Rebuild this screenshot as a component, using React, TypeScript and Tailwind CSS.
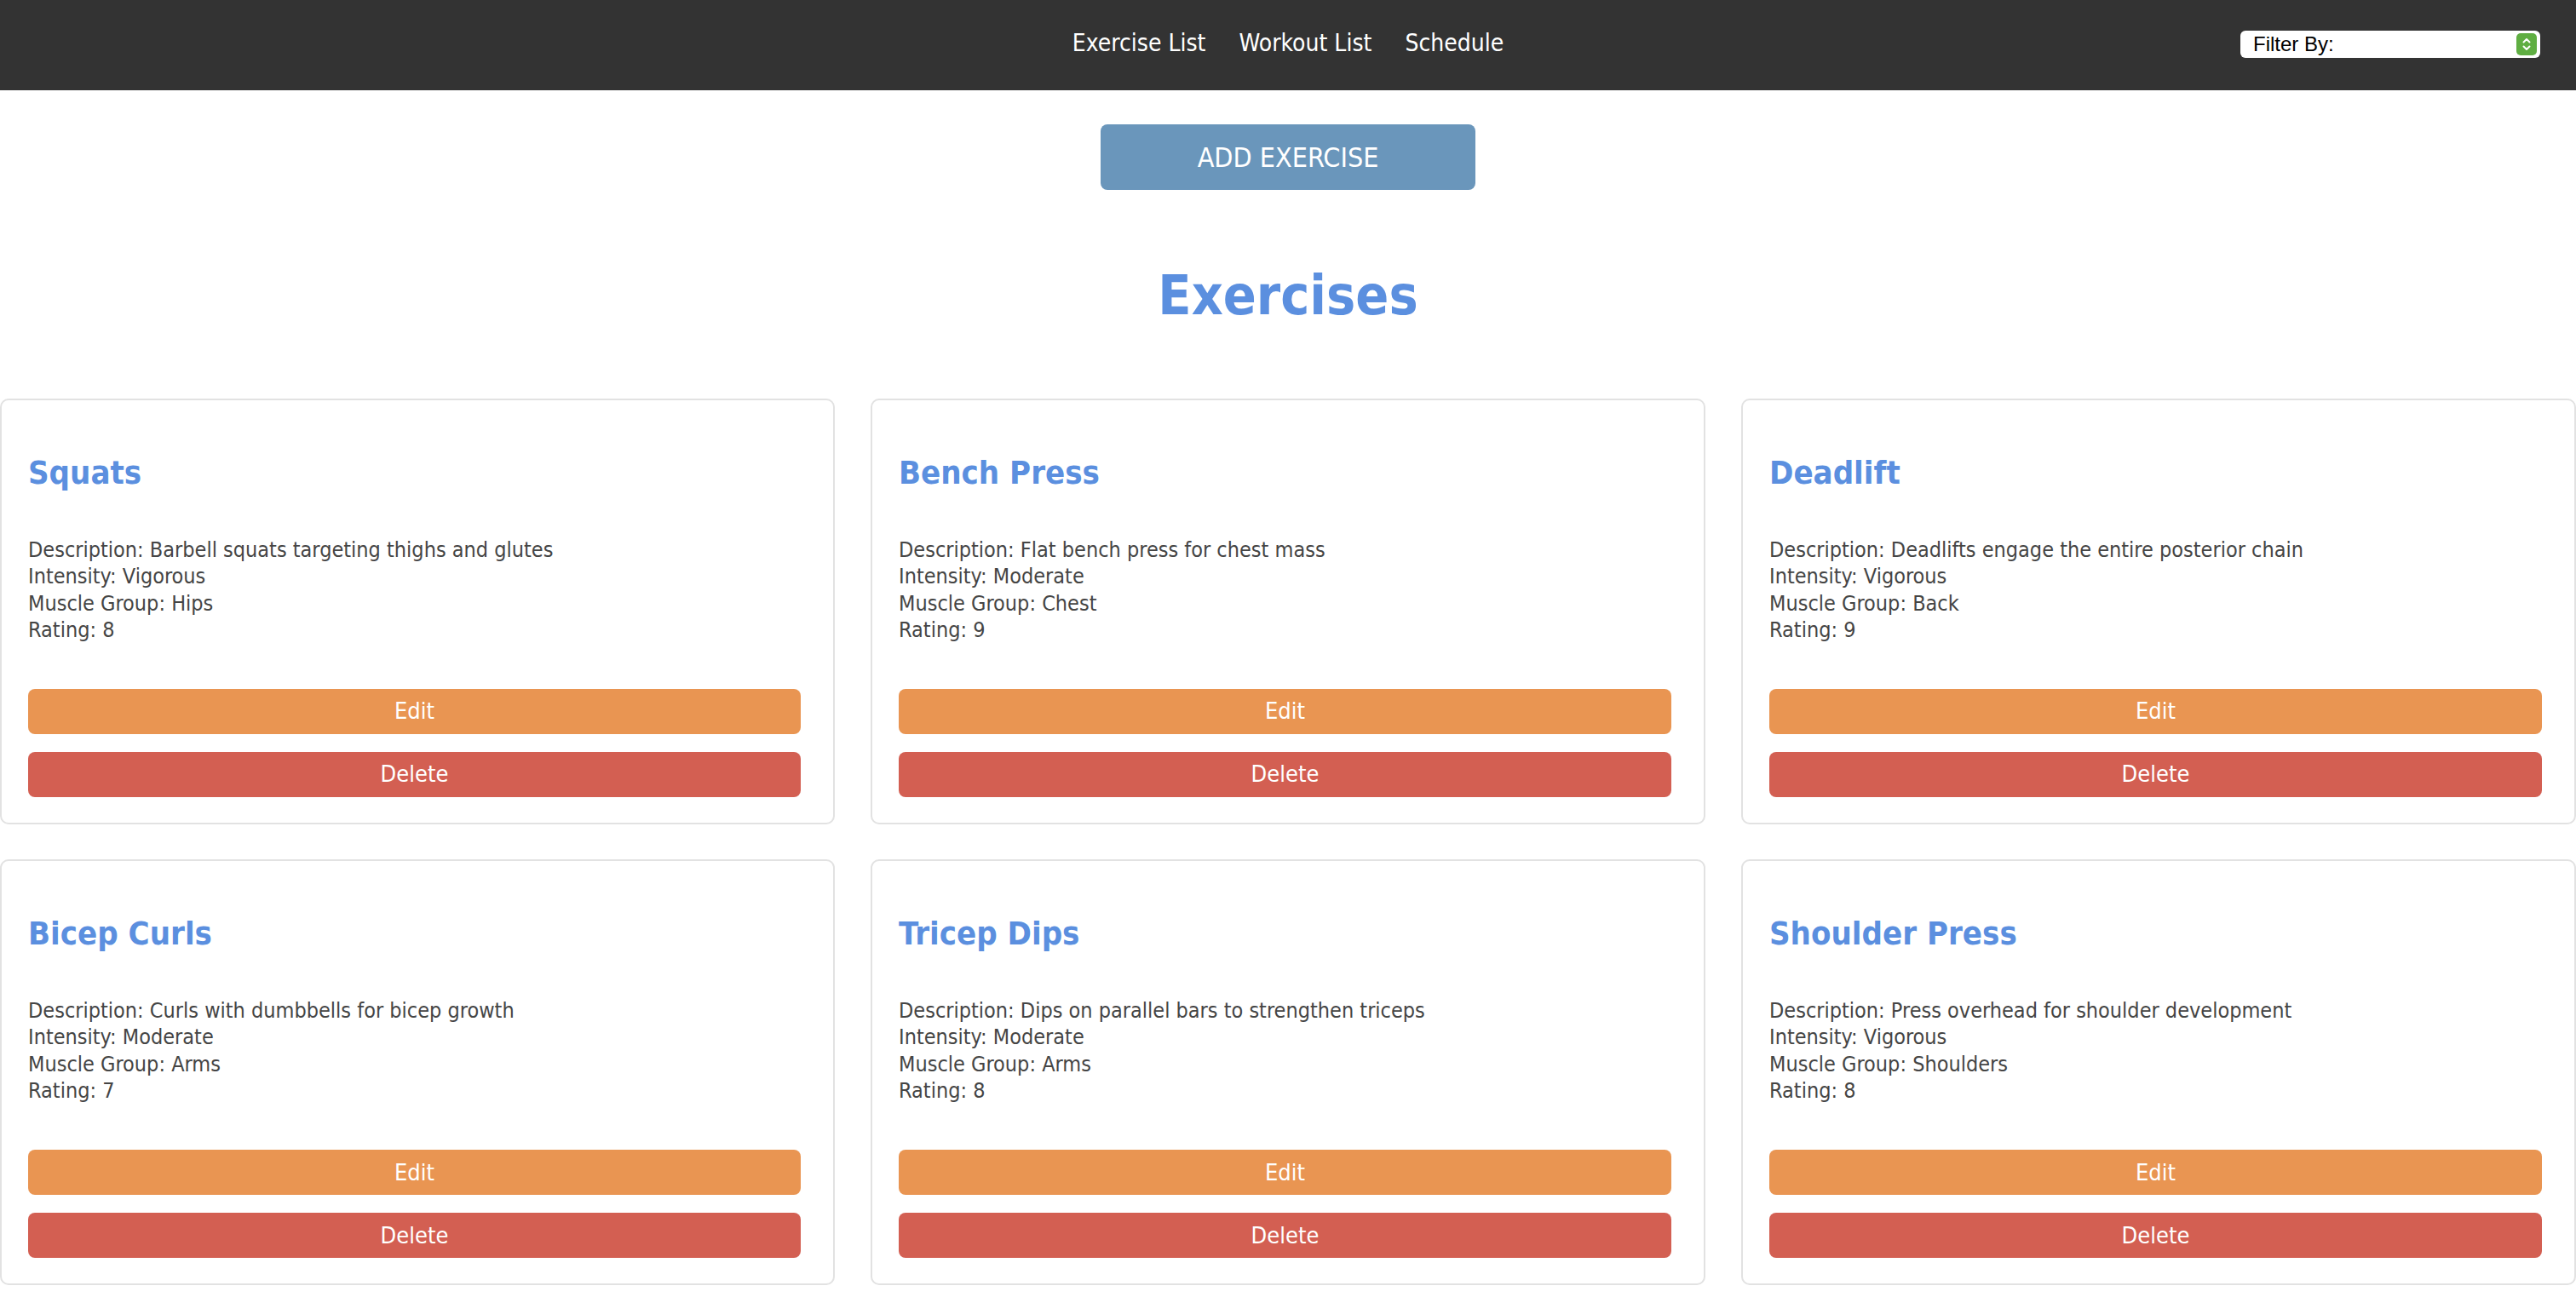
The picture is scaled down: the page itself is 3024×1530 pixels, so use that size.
import React from "react";

type Exercise = {
  name: string;
  description: string;
  intensity: string;
  muscleGroup: string;
  rating: number;
};

const EXERCISES: Exercise[] = [
  {
    name: "Squats",
    description: "Barbell squats targeting thighs and glutes",
    intensity: "Vigorous",
    muscleGroup: "Hips",
    rating: 8,
  },
  {
    name: "Bench Press",
    description: "Flat bench press for chest mass",
    intensity: "Moderate",
    muscleGroup: "Chest",
    rating: 9,
  },
  {
    name: "Deadlift",
    description: "Deadlifts engage the entire posterior chain",
    intensity: "Vigorous",
    muscleGroup: "Back",
    rating: 9,
  },
  {
    name: "Bicep Curls",
    description: "Curls with dumbbells for bicep growth",
    intensity: "Moderate",
    muscleGroup: "Arms",
    rating: 7,
  },
  {
    name: "Tricep Dips",
    description: "Dips on parallel bars to strengthen triceps",
    intensity: "Moderate",
    muscleGroup: "Arms",
    rating: 8,
  },
  {
    name: "Shoulder Press",
    description: "Press overhead for shoulder development",
    intensity: "Vigorous",
    muscleGroup: "Shoulders",
    rating: 8,
  },
];

const FONT = "font-['Tahoma','DejaVu_Sans_Condensed','DejaVu_Sans',sans-serif]";

function FilterSelect() {
  return (
    <div className="flex h-[32px] w-[352px] items-center justify-between rounded-[6px] bg-white pl-[15px] pr-[4px]">
      <span className="font-['Liberation_Sans','Helvetica',sans-serif] text-[24px] leading-none text-black">
        Filter By:
      </span>
      <span className="flex h-[26px] w-[24px] items-center justify-center rounded-[5px] bg-[#5fae42]">
        <svg width="12" height="18" viewBox="0 0 12 18" fill="none">
          <path d="M2.5 6.5 6 3l3.5 3.5" stroke="white" strokeWidth="2" strokeLinecap="round" strokeLinejoin="round" />
          <path d="M2.5 11.5 6 15l3.5-3.5" stroke="white" strokeWidth="2" strokeLinecap="round" strokeLinejoin="round" />
        </svg>
      </span>
    </div>
  );
}

function ExerciseCard({ exercise }: { exercise: Exercise }) {
  return (
    <div className="flex flex-col rounded-[10px] border-2 border-[#e2e2e2] bg-white pb-[30px] pl-[31px] pr-[38px] pt-[62px]">
      <h3 className="text-[38px] font-bold leading-[46px] text-[#5b8fdf]">{exercise.name}</h3>
      <div className="mt-[52px] text-[25px] leading-[31.3px] text-[#454545]">
        <p>Description: {exercise.description}</p>
        <p>Intensity: {exercise.intensity}</p>
        <p>Muscle Group: {exercise.muscleGroup}</p>
        <p>Rating: {exercise.rating}</p>
      </div>
      <div className="mt-[54px] flex flex-col gap-[21px]">
        <button className="h-[53px] rounded-[8px] bg-[#e99552] text-[27px] text-white">Edit</button>
        <button className="h-[53px] rounded-[8px] bg-[#d35f52] text-[27px] text-white">Delete</button>
      </div>
    </div>
  );
}

export default function App() {
  return (
    <div className={`min-h-screen bg-white ${FONT}`}>
      <header className="grid h-[106px] grid-cols-[1fr_auto_1fr] items-center bg-[#333333]">
        <div />
        <nav className="-mt-[4px] flex items-center gap-[39px] text-[28px] text-white">
          <a href="#">Exercise List</a>
          <a href="#">Workout List</a>
          <a href="#">Schedule</a>
        </nav>
        <div className="-mt-[2px] flex justify-end pr-[42px]">
          <FilterSelect />
        </div>
      </header>

      <main className="flex flex-col items-center">
        <button className="mt-[40px] h-[77px] w-[440px] rounded-[8px] bg-[#6a96bb] text-[32px] text-white">
          ADD EXERCISE
        </button>
        <h1 className="mt-[84px] text-[64px] font-bold leading-[80px] text-[#5b8fdf]">Exercises</h1>
        <div className="mt-[81px] grid w-full grid-cols-3 gap-x-[42px] gap-y-[41px]">
          {EXERCISES.map((e) => (
            <ExerciseCard key={e.name} exercise={e} />
          ))}
        </div>
      </main>
    </div>
  );
}
